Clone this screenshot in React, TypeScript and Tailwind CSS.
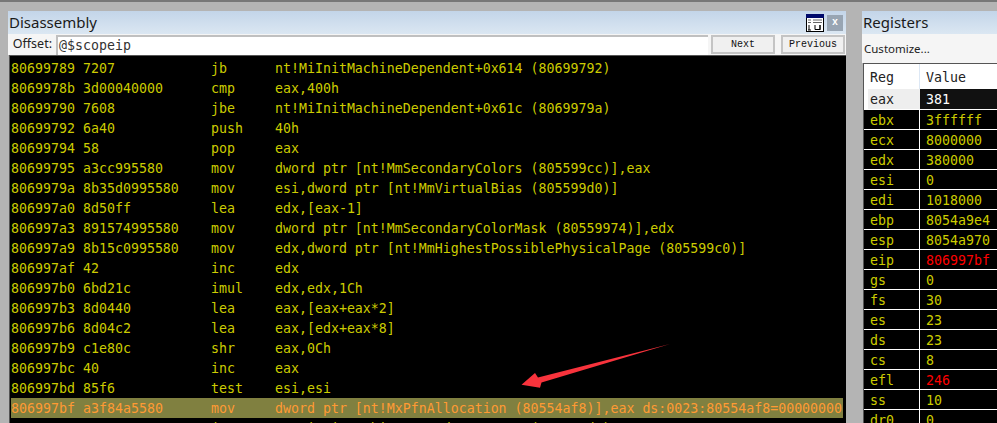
import React from "react";

const mono = "font-['DejaVu_Sans_Mono',monospace] text-[13.28px]";

type Line = { addr: string; bytes: string; op: string; args: string };

const lines: Line[] = [
  { addr: "80699789", bytes: "7207", op: "jb", args: "nt!MiInitMachineDependent+0x614 (80699792)" },
  { addr: "8069978b", bytes: "3d00040000", op: "cmp", args: "eax,400h" },
  { addr: "80699790", bytes: "7608", op: "jbe", args: "nt!MiInitMachineDependent+0x61c (8069979a)" },
  { addr: "80699792", bytes: "6a40", op: "push", args: "40h" },
  { addr: "80699794", bytes: "58", op: "pop", args: "eax" },
  { addr: "80699795", bytes: "a3cc995580", op: "mov", args: "dword ptr [nt!MmSecondaryColors (805599cc)],eax" },
  { addr: "8069979a", bytes: "8b35d0995580", op: "mov", args: "esi,dword ptr [nt!MmVirtualBias (805599d0)]" },
  { addr: "806997a0", bytes: "8d50ff", op: "lea", args: "edx,[eax-1]" },
  { addr: "806997a3", bytes: "891574995580", op: "mov", args: "dword ptr [nt!MmSecondaryColorMask (80559974)],edx" },
  { addr: "806997a9", bytes: "8b15c0995580", op: "mov", args: "edx,dword ptr [nt!MmHighestPossiblePhysicalPage (805599c0)]" },
  { addr: "806997af", bytes: "42", op: "inc", args: "edx" },
  { addr: "806997b0", bytes: "6bd21c", op: "imul", args: "edx,edx,1Ch" },
  { addr: "806997b3", bytes: "8d0440", op: "lea", args: "eax,[eax+eax*2]" },
  { addr: "806997b6", bytes: "8d04c2", op: "lea", args: "eax,[edx+eax*8]" },
  { addr: "806997b9", bytes: "c1e80c", op: "shr", args: "eax,0Ch" },
  { addr: "806997bc", bytes: "40", op: "inc", args: "eax" },
  { addr: "806997bd", bytes: "85f6", op: "test", args: "esi,esi" },
  { addr: "806997bf", bytes: "a3f84a5580", op: "mov", args: "dword ptr [nt!MxPfnAllocation (80554af8)],eax ds:0023:80554af8=00000000" },
  { addr: "806997c4", bytes: "7410", op: "je", args: "nt!MiInitMachineDependent+0x658 (806997d6)" },
];

const regs: [string, string, string?][] = [
  ["ebx", "3ffffff"],
  ["ecx", "8000000"],
  ["edx", "380000"],
  ["esi", "0"],
  ["edi", "1018000"],
  ["ebp", "8054a9e4"],
  ["esp", "8054a970"],
  ["eip", "806997bf", "red"],
  ["gs", "0"],
  ["fs", "30"],
  ["es", "23"],
  ["ds", "23"],
  ["cs", "8"],
  ["efl", "246", "red"],
  ["ss", "10"],
  ["dr0", "0"],
];

function NavButton({ label }: { label: string }) {
  return (
    <div className="w-[64px] h-[19px] flex items-center justify-center bg-[#f0f0f0] border-2 border-[#c4c4c4] font-['Liberation_Mono',monospace] text-[10px] text-[#111]">
      {label}
    </div>
  );
}

function TitleBar({ title, children }: { title: string; children?: React.ReactNode }) {
  return (
    <div className="h-[23px] flex items-center justify-between bg-gradient-to-b from-[#c3d5e9] to-[#dbe7f2]">
      <span className="font-['Noto_Sans',sans-serif] text-[15px] text-[#1a1a1a] leading-none pl-px">{title}</span>
      {children}
    </div>
  );
}

function Disassembly() {
  return (
    <div className="w-[838px] flex flex-col shrink-0">
      <TitleBar title="Disassembly">
        <div className="flex items-center gap-[3px] pr-[3px]">
          <svg width="18" height="18" viewBox="0 0 18 18">
            <rect x="0.5" y="0.5" width="17" height="17" fill="#fff" stroke="#000" />
            <rect x="0" y="0" width="18" height="4" fill="#000a6b" />
            <path d="M2 6h3M7 6h9M2 8.500h3M7 8.500h9" stroke="#666" />
            <path d="M3 11v5M2 16h3M9 11v4.500h5V11M14 11v5" stroke="#000" fill="none" />
          </svg>
          <div className="w-4 h-4 flex items-center justify-center bg-[#98a5b3] text-white text-[10px] font-bold font-['Liberation_Mono',monospace] leading-none">
            x
          </div>
        </div>
      </TitleBar>
      <div className="h-[21px] flex items-center bg-[#f5f5f5]">
        <span className="w-[44px] text-right font-['Noto_Sans',sans-serif] text-[12.500px] text-[#222] shrink-0">Offset:</span>
        <div className={`ml-[4px] w-[652px] h-[20px] flex items-center pl-px bg-white border-t-2 border-l-2 border-[#c0c0c0] text-[#333] ${mono}`}>
          @$scopeip
        </div>
        <div className="ml-[3px] flex gap-[6px]">
          <NavButton label="Next" />
          <NavButton label="Previous" />
        </div>
      </div>
      <div className="h-[368px] ml-px border-t border-l border-[#555] bg-black pt-[2px] overflow-hidden">
        {lines.map((l, i) => (
          <div
            key={l.addr}
            className={`h-[20px] w-[832px] ml-px pt-[1px] flex items-center whitespace-pre overflow-hidden ${mono} ${
              i === 17 ? "bg-[#808040] text-[#ff9a33]" : "text-[#cccc00]"
            }`}
          >
            <span className="w-[72px] shrink-0">{l.addr}</span>
            <span className="w-[128px] shrink-0">{l.bytes}</span>
            <span className="w-[64px] shrink-0">{l.op}</span>
            <span>{l.args}</span>
          </div>
        ))}
      </div>
    </div>
  );
}

function Registers() {
  return (
    <div className="flex-1 flex flex-col ml-[16px] min-w-0">
      <TitleBar title="Registers" />
      <div className="h-[29px] flex items-center pl-[2px] bg-[#f5f5f5] font-['Noto_Sans',sans-serif] text-[11.500px] text-[#222]">
        Customize...
      </div>
      <div className="flex-1 ml-px border-t border-l border-[#555] bg-black overflow-hidden">
        <div className={`h-[25px] flex bg-white text-[#222] ${mono}`}>
          <span className="w-[56px] pl-[6px] border-r border-[#dde8f5] shrink-0 leading-[27px]">Reg</span>
          <span className="pl-[6px] leading-[27px]">Value</span>
        </div>
        <div className={`h-[20px] flex bg-white ${mono}`}>
          <span className="w-[56px] h-full ml-[4px] pl-[2px] bg-[#eeeeee] text-[#222] shrink-0 leading-[22px] -mr-[4px]">eax</span>
          <span className="flex-1 h-full pl-[6px] bg-[#111] text-white leading-[22px]">381</span>
        </div>
        {regs.map(([name, value, tone]) => (
          <div key={name} className={`h-[20px] flex border-t border-white text-[#cccc00] ${mono}`}>
            <span className="w-[56px] pl-[6px] border-r border-white shrink-0 leading-[21px]">{name}</span>
            <span className={`pl-[6px] leading-[21px] ${tone === "red" ? "text-[#ff0000]" : ""}`}>{value}</span>
          </div>
        ))}
      </div>
    </div>
  );
}

export default function App() {
  return (
    <div className="relative w-[997px] h-[423px] overflow-hidden bg-[#b4b4b4] border-t-2 border-t-[#777] pt-[9px] pl-[8px] flex">
      <Disassembly />
      <Registers />
      {/* red annotation arrow drawn over the listing */}
      <svg className="absolute left-[515px] top-[335px]" width="160" height="56" viewBox="515 335 160 56">
        <path d="M670 342 L538 375.500 L535 371 L521.500 382.700 L540 385.700 L541.500 380.500 Z" fill="#f8333c" />
      </svg>
    </div>
  );
}
